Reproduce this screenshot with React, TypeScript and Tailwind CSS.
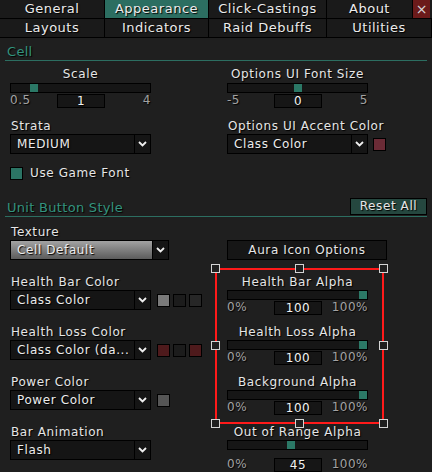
import React from 'react';

const shadow = '[text-shadow:1px_1px_1px_#000]';

function Chevron() {
    return (
        <svg width="9" height="6" viewBox="0 0 9 6">
            <polyline points="1,1 4.5,4.5 8,1" fill="none" stroke="#f0f0f0" strokeWidth="1.8" />
        </svg>
    );
}

function Dropdown({ text, wide, shaded }: { text: string; wide?: boolean; shaded?: boolean }) {
    return (
        <div className={`flex h-[20px] border border-black ${wide ? 'w-[159px]' : 'w-[141px]'}`}>
            <div
                className={`flex-1 pl-[6px] text-[12px] leading-[18px] tracking-[0.6px] text-[#ececec] ${shadow} ${
                    shaded ? 'bg-gradient-to-b from-[#a3a3a3] to-[#5c5c5c]' : 'bg-[#151515]'
                }`}
            >
                {text}
            </div>
            <div className="flex w-[16px] items-center justify-center border-l border-black bg-[#151515]">
                <Chevron />
            </div>
        </div>
    );
}

function Slider({ frac, min, max, value, last }: { frac: number; min: string; max: string; value: string; last?: boolean }) {
    return (
        <div className="w-[141px]">
            <div className="relative h-[10px] border border-black bg-[#161616]">
                <div className="absolute top-0 h-[8px] w-[8px] bg-[#2b7866]" style={{ left: Math.round(frac * 131) }} />
            </div>
            <div className={`grid grid-cols-[47px_48px_46px] text-[12px] leading-[13px] tracking-[0.5px] ${shadow} ${last ? 'mt-[8px]' : 'mt-[1px]'}`}>
                <span className="text-[#a2a2a2]">{min}</span>
                <span className="h-[14px] border border-black bg-[#161616] text-center leading-[12px] text-[#f2f2f2]">{value}</span>
                <span className="text-right text-[#a2a2a2]">{max}</span>
            </div>
        </div>
    );
}

function Label({ children, center }: { children: React.ReactNode; center?: boolean }) {
    return (
        <div className={`h-[14px] text-[12px] leading-[14px] tracking-[0.6px] text-[#e6e6e6] ${shadow} ${center ? 'w-[141px] text-center' : 'pl-[1px]'}`}>
            {children}
        </div>
    );
}

function Swatch({ color }: { color: string }) {
    return <div className={`h-[13px] w-[13px] border border-black`} style={{ backgroundColor: color }} />;
}

function Header({ title, children }: { title: string; children?: React.ReactNode }) {
    return (
        <div className="mx-[5px] flex h-[18px] items-end justify-between border-b border-[#2c6e61]">
            <span className={`pl-[2px] text-[13px] leading-[17px] tracking-[0.3px] text-[#33937e] ${shadow}`}>{title}</span>
            {children}
        </div>
    );
}

const tabs1 = [
    { name: 'General', w: 'w-[105px]' },
    { name: 'Appearance', w: 'w-[104px]', active: true },
    { name: 'Click-Castings', w: 'w-[118px]' },
    { name: 'About', w: 'w-[86px]' },
];
const tabs2 = [
    { name: 'Layouts', w: 'w-[105px]' },
    { name: 'Indicators', w: 'w-[104px]' },
    { name: 'Raid Debuffs', w: 'w-[118px]' },
    { name: 'Utilities', w: 'flex-1' },
];

function Handle({ pos }: { pos: string }) {
    return <div className={`absolute h-[9px] w-[9px] border border-[#d4d4d4] bg-[#1f1f1f] ${pos}`} />;
}

export default function App() {
    return (
        <div className="relative h-[472px] w-[432px] overflow-hidden bg-[#1f1f1f] font-['DejaVu_Sans',sans-serif]">
            <div className="flex">
                {tabs1.map((t) => (
                    <div
                        key={t.name}
                        className={`h-[19px] border-r border-b border-black text-center text-[13px] leading-[18px] tracking-[0.5px] text-[#ececec] ${shadow} ${t.w} ${
                            t.active ? 'bg-[#2c6e61]' : 'bg-[#1a1a1a]'
                        }`}
                    >
                        {t.name}
                    </div>
                ))}
                <div className="flex h-[19px] w-[17px] items-center justify-center border-b border-black bg-[#6b1a1a] text-[14px] leading-[18px] text-[#d8d8d8]">
                    ×
                </div>
                <div className="h-[19px] flex-1 border-b border-black bg-[#1a1a1a]" />
            </div>
            <div className="flex">
                {tabs2.map((t) => (
                    <div
                        key={t.name}
                        className={`h-[19px] border-r border-b border-black bg-[#1a1a1a] text-center text-[13px] leading-[18px] tracking-[0.5px] text-[#ececec] ${shadow} ${t.w}`}
                    >
                        {t.name}
                    </div>
                ))}
            </div>

            <div className="mt-[5px]">
                <Header title="Cell" />
            </div>

            <div className="mt-[6px] flex pl-[10px]">
                <div className="flex w-[217px] flex-col">
                    <Label center>Scale</Label>
                    <div className="mt-[2px]">
                        <Slider frac={0.143} min="0.5" max="4" value="1" />
                    </div>
                    <div className="mt-[11px]">
                        <Label>Strata</Label>
                    </div>
                    <div className="mt-[1px]">
                        <Dropdown text="MEDIUM" />
                    </div>
                    <div className="mt-[12px] flex items-center gap-[7px]">
                        <div className="h-[13px] w-[13px] border border-black bg-[#2b7464]" />
                        <span className={`text-[12px] leading-[14px] tracking-[0.6px] text-[#e6e6e6] ${shadow}`}>Use Game Font</span>
                    </div>
                </div>
                <div className="flex flex-col">
                    <Label center>Options UI Font Size</Label>
                    <div className="mt-[2px]">
                        <Slider frac={0.5} min="-5" max="5" value="0" />
                    </div>
                    <div className="mt-[11px]">
                        <Label>Options UI Accent Color</Label>
                    </div>
                    <div className="mt-[1px] flex items-center gap-[5px]">
                        <Dropdown text="Class Color" />
                        <Swatch color="#6b2b36" />
                    </div>
                </div>
            </div>

            <div className="mt-[19px]">
                <Header title="Unit Button Style">
                    <div className={`mb-[1px] h-[17px] w-[77px] border border-black bg-[#25473f] text-center text-[12px] leading-[15px] tracking-[0.6px] text-[#e6e6e6] ${shadow}`}>
                        Reset All
                    </div>
                </Header>
            </div>

            <div className="mt-[8px] flex pl-[10px]">
                <div className="flex w-[217px] flex-col">
                    <div className="h-[50px]">
                        <Label>Texture</Label>
                        <div className="mt-[1px]">
                            <Dropdown text="Cell Default" wide shaded />
                        </div>
                    </div>
                    <div className="h-[50px]">
                        <Label>Health Bar Color</Label>
                        <div className="mt-[1px] flex items-center">
                            <Dropdown text="Class Color" />
                            <div className="ml-[6px] flex gap-[3px]">
                                <Swatch color="#7a7a7a" />
                                <Swatch color="#1c1c1c" />
                                <Swatch color="#272727" />
                            </div>
                        </div>
                    </div>
                    <div className="h-[50px]">
                        <Label>Health Loss Color</Label>
                        <div className="mt-[1px] flex items-center">
                            <Dropdown text="Class Color (da..." />
                            <div className="ml-[6px] flex gap-[3px]">
                                <Swatch color="#4e1a1c" />
                                <Swatch color="#1c1c1c" />
                                <Swatch color="#4e1a1c" />
                            </div>
                        </div>
                    </div>
                    <div className="h-[50px]">
                        <Label>Power Color</Label>
                        <div className="mt-[1px] flex items-center">
                            <Dropdown text="Power Color" />
                            <div className="ml-[6px]">
                                <Swatch color="#555555" />
                            </div>
                        </div>
                    </div>
                    <div className="h-[50px]">
                        <Label>Bar Animation</Label>
                        <div className="mt-[1px]">
                            <Dropdown text="Flash" />
                        </div>
                    </div>
                </div>
                <div className="flex flex-col">
                    <div className="h-[50px] pt-[15px]">
                        <div className={`h-[20px] w-[160px] border border-black bg-[#161616] text-center text-[12px] leading-[18px] tracking-[0.6px] text-[#e6e6e6] ${shadow}`}>
                            Aura Icon Options
                        </div>
                    </div>
                    {[
                        { t: 'Health Bar Alpha', f: 1, v: '100' },
                        { t: 'Health Loss Alpha', f: 1, v: '100' },
                        { t: 'Background Alpha', f: 1, v: '100' },
                        { t: 'Out of Range Alpha', f: 0.45, v: '45', last: true },
                    ].map((s) => (
                        <div key={s.t} className="h-[50px]">
                            <Label center>{s.t}</Label>
                            <div className="mt-[1px]">
                                <Slider frac={s.f} min="0%" max="100%" value={s.v} last={s.last} />
                            </div>
                        </div>
                    ))}
                </div>
            </div>

            <div className="absolute left-[215px] top-[268px] h-[156px] w-[169px] border-2 border-[#ff1a1a]">
                <Handle pos="-left-[6px] -top-[6px]" />
                <Handle pos="left-[78px] -top-[6px]" />
                <Handle pos="-right-[6px] -top-[6px]" />
                <Handle pos="-left-[6px] top-[71px]" />
                <Handle pos="-right-[6px] top-[71px]" />
                <Handle pos="-left-[6px] -bottom-[6px]" />
                <Handle pos="left-[78px] -bottom-[6px]" />
                <Handle pos="-right-[6px] -bottom-[6px]" />
            </div>
        </div>
    );
}
